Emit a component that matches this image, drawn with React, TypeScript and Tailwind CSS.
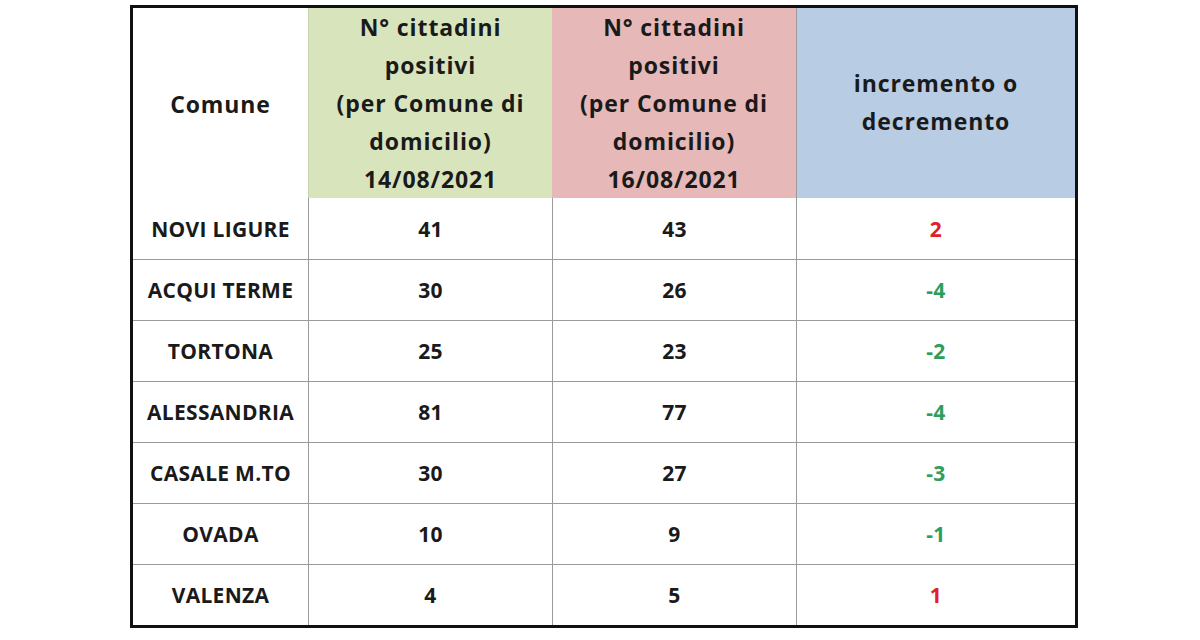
import React from "react";

const rows: [string, string, string, string, "r" | "g"][] = [
  ["NOVI LIGURE", "41", "43", "2", "r"],
  ["ACQUI TERME", "30", "26", "-4", "g"],
  ["TORTONA", "25", "23", "-2", "g"],
  ["ALESSANDRIA", "81", "77", "-4", "g"],
  ["CASALE M.TO", "30", "27", "-3", "g"],
  ["OVADA", "10", "9", "-1", "g"],
  ["VALENZA", "4", "5", "1", "r"],
];

export default function App() {
  return (
    <div className="w-[1200px] h-[640px] bg-white pt-[5px] pl-[130px]" style={{ fontFamily: "'Open Sans', Lato, sans-serif" }}>
      <div className="w-[948px] border-[3px] border-[#111] text-[#1a1a1a] font-bold">
        <div className="grid grid-cols-[175px_244px_244px_1fr] h-[190px] border-b border-[#9a9a9a] text-[23px] leading-[38px] tracking-[0.9px] text-center">
          <div className="flex items-center justify-center bg-white pt-[2px]">Comune</div>
          <div className="flex items-center justify-center bg-[#d8e4bc] border-l border-[#c8d4b0]">
            <div>N° cittadini<br />positivi<br />(per Comune di<br />domicilio)<br />14/08/2021</div>
          </div>
          <div className="flex items-center justify-center bg-[#e6b8b7]">
            <div>N° cittadini<br />positivi<br />(per Comune di<br />domicilio)<br />16/08/2021</div>
          </div>
          <div className="flex items-center justify-center bg-[#b8cce4] border-l border-[#9a9a9a] pb-[2px]">
            <div>incremento o<br />decremento</div>
          </div>
        </div>
        {rows.map((r, i) => (
          <div
            key={r[0]}
            className={`grid grid-cols-[175px_244px_244px_1fr] h-[61px] text-[21px] tracking-[0.3px] text-center ${i > 0 ? "border-t border-[#9a9a9a]" : ""}`}
          >
            <div className="flex items-center justify-center pt-[2px]">{r[0]}</div>
            <div className="flex items-center justify-center border-l border-[#9a9a9a] pt-[2px]">{r[1]}</div>
            <div className="flex items-center justify-center border-l border-[#9a9a9a] pt-[2px]">{r[2]}</div>
            <div
              className={`flex items-center justify-center border-l border-[#9a9a9a] pt-[2px] ${r[4] === "r" ? "text-[#e0202a]" : "text-[#2f9e5c]"}`}
            >
              {r[3]}
            </div>
          </div>
        ))}
      </div>
    </div>
  );
}
